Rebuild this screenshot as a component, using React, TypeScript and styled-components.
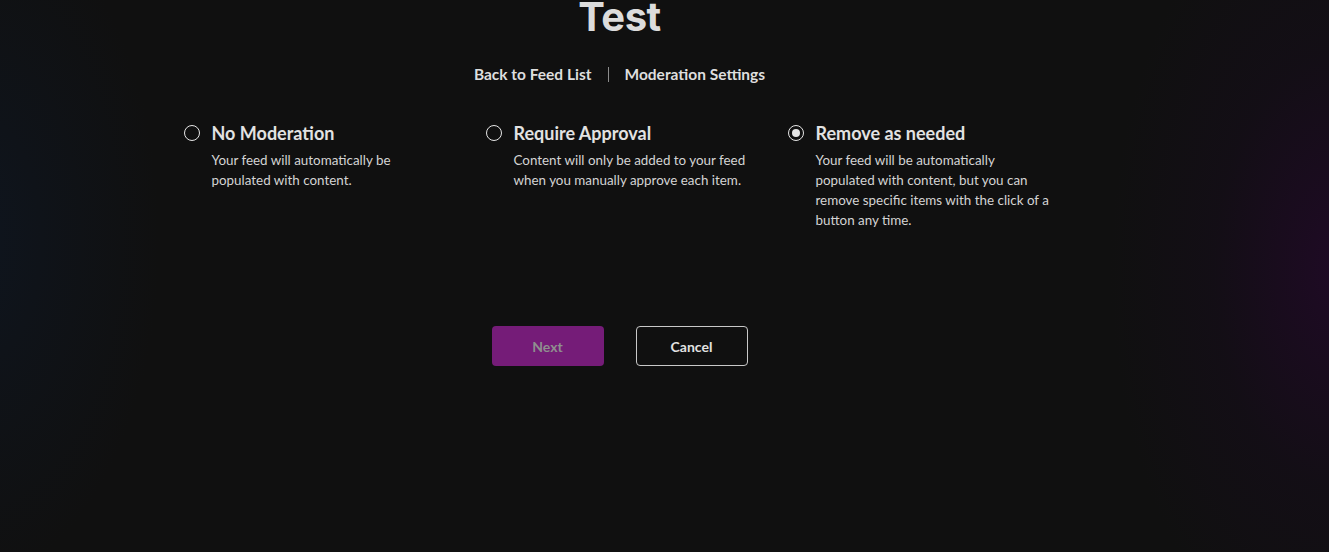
import styled, { createGlobalStyle } from "styled-components";

const GlobalStyle = createGlobalStyle`
  html, body { margin: 0; padding: 0; height: 100%; }
  body {
    background: #101010;
    font-family: Lato, "Liberation Sans", sans-serif;
    color: #e2e2e2;
    overflow: hidden;
  }
  #root { height: 100%; }
`;

interface Option {
  id: string;
  title: string;
  desc: string;
}

const options: Option[] = [
  { id: "none", title: "No Moderation", desc: "Your feed will automatically be populated with content." },
  { id: "approval", title: "Require Approval", desc: "Content will only be added to your feed when you manually approve each item." },
  { id: "remove", title: "Remove as needed", desc: "Your feed will be automatically populated with content, but you can remove specific items with the click of a button any time." },
];

export default function App() {
  const selected = "remove";
  return (
    <>
      <GlobalStyle />
      <Page>
        <Title>Test</Title>
        <Nav>
          <NavLink>Back to Feed List</NavLink>
          <NavSep />
          <NavLink>Moderation Settings</NavLink>
        </Nav>

        <Options>
          {options.map((o) => (
            <OptionItem key={o.id}>
              <Radio $checked={o.id === selected} />
              <OptionText>
                <OptionTitle>{o.title}</OptionTitle>
                <OptionDesc>{o.desc}</OptionDesc>
              </OptionText>
            </OptionItem>
          ))}
        </Options>

        <Actions>
          <PrimaryButton disabled>Next</PrimaryButton>
          <OutlineButton>Cancel</OutlineButton>
        </Actions>
      </Page>
    </>
  );
}

const Page = styled.div`
  height: 552px;
  box-sizing: border-box;
  padding-right: 90px;
  display: flex;
  flex-direction: column;
  align-items: center;
  background:
    radial-gradient(ellipse 230px 400px at 1340px 270px, rgba(36, 8, 44, 0.75), rgba(26, 10, 34, 0.3) 55%, transparent 100%),
    radial-gradient(ellipse 190px 340px at -30px 240px, rgba(14, 22, 34, 0.8), transparent 100%),
    #101010;
`;

const Title = styled.h1`
  margin: -5px 0 0;
  font-family: Inter, "Liberation Sans", sans-serif;
  font-weight: 700;
  font-size: 40px;
  line-height: 44px;
  letter-spacing: -0.5px;
  color: #dcdcdc;
`;

const Nav = styled.nav`
  margin-top: 26px;
  display: flex;
  align-items: center;
  gap: 16px;
`;

const NavLink = styled.span`
  font-size: 15.5px;
  font-weight: 700;
  color: #dedede;
  line-height: 18px;
  cursor: pointer;
`;

const NavSep = styled.span`
  width: 1px;
  height: 15px;
  background: #8c8c8c;
`;

const Options = styled.div`
  margin-top: 39px;
  display: grid;
  grid-template-columns: repeat(3, 302px);
  margin-left: 34px;
`;

const OptionItem = styled.label`
  display: flex;
  align-items: flex-start;
  gap: 12px;
  cursor: pointer;
`;

const Radio = styled.span<{ $checked: boolean }>`
  flex: none;
  width: 16px;
  height: 16px;
  margin-top: 3px;
  box-sizing: border-box;
  border-radius: 50%;
  border: 1.5px solid #e6e6e6;
  display: flex;
  align-items: center;
  justify-content: center;
  &::after {
    content: "";
    width: 8px;
    height: 8px;
    border-radius: 50%;
    background: #e6e6e6;
    display: ${(p) => (p.$checked ? "block" : "none")};
  }
`;

const OptionText = styled.div`
  display: flex;
  flex-direction: column;
  width: 236px;
`;

const OptionTitle = styled.div`
  font-size: 18px;
  font-weight: 700;
  line-height: 22px;
  color: #e2e2e2;
`;

const OptionDesc = styled.div`
  margin-top: 6px;
  font-size: 13.4px;
  line-height: 20px;
  color: #d4d4d4;
`;

const Actions = styled.div`
  margin-top: 96px;
  display: flex;
  gap: 32px;
`;

const ButtonBase = styled.button`
  width: 112px;
  height: 40px;
  border-radius: 4px;
  font-family: Lato, "Liberation Sans", sans-serif;
  font-size: 14px;
  font-weight: 700;
  cursor: pointer;
`;

const PrimaryButton = styled(ButtonBase)`
  background: #751c78;
  border: none;
  color: #8f8f8f;
  &:disabled { cursor: default; }
`;

const OutlineButton = styled(ButtonBase)`
  background: transparent;
  border: 1px solid #c8c8c8;
  color: #e2e2e2;
`;
